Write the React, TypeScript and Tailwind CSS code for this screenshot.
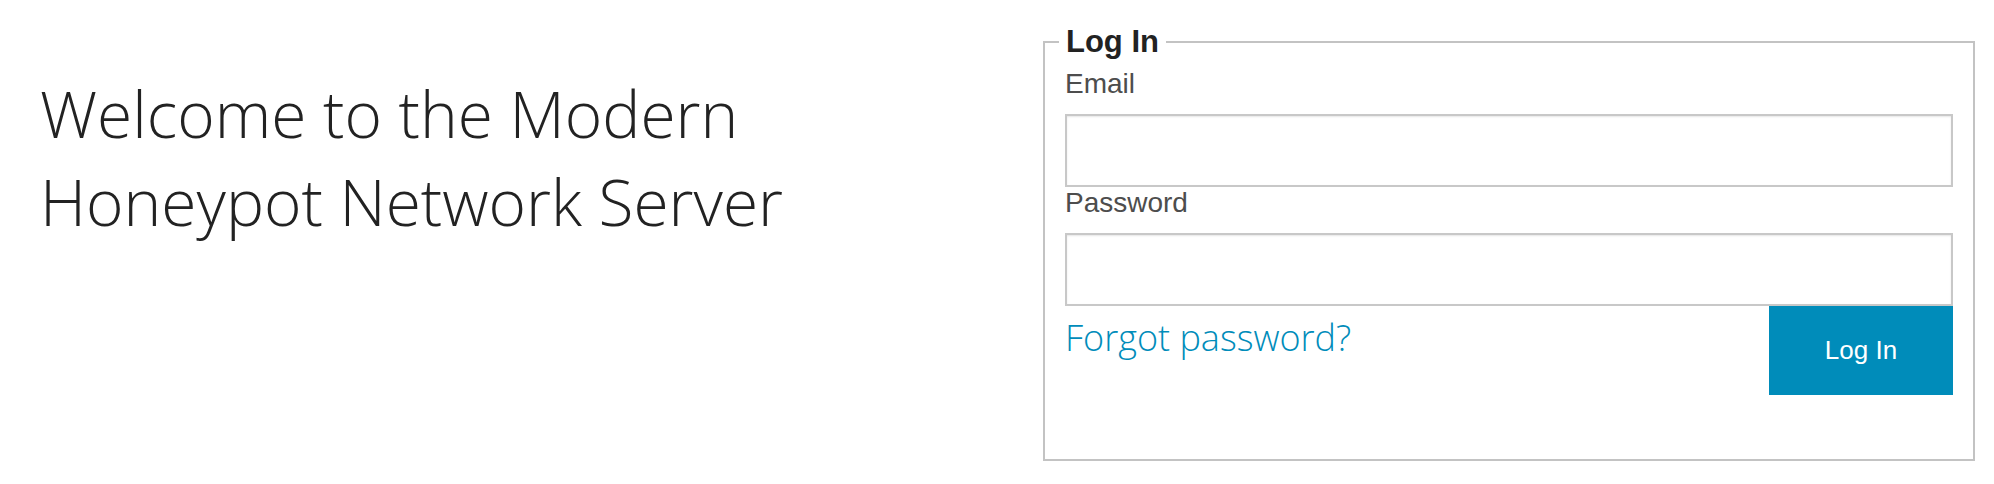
const sans = "font-['Liberation_Sans',Arial,sans-serif]";
const open = "font-['Open_Sans',sans-serif]";

function Field({ label, type }: { label: string; type: string }) {
  return (
    <div>
      <label className={`block ${sans} text-[28px] leading-[31px] text-[#4d4d4d] mb-[15px]`}>
        {label}
      </label>
      <input
        type={type}
        className="block w-full h-[73px] bg-white border-2 border-[#c8c8c8] shadow-[inset_0_1px_2px_rgba(0,0,0,0.1)] outline-none px-3"
      />
    </div>
  );
}

export default function App() {
  return (
    <div className="flex w-[1994px] min-h-[484px] bg-white">
      <div className="flex-1 pl-[40px] pt-[70px]">
        <h1 className={`${open} font-light text-[64px] leading-[88px] text-[#222222] max-w-[860px]`}>
          Welcome to the Modern Honeypot Network Server
        </h1>
      </div>
      <form className="w-[932px] mr-[19px] mt-[19px]">
        <fieldset className="border-2 border-[#c3c3c3] px-[20px] pt-[2px] pb-[64px]">
          <legend className={`${sans} font-bold text-[31px] text-[#222222] ml-[-6px] px-[7px]`}>
            Log In
          </legend>
          <Field label="Email" type="email" />
          <Field label="Password" type="password" />
          <div className="flex items-start justify-between">
            <a href="#" className={`${open} font-light text-[36px] text-[#008cba] pt-[5px]`}>
              Forgot password?
            </a>
            <button
              type="submit"
              className={`w-[184px] h-[89px] bg-[#008cba] text-white ${sans} text-[26px]`}
            >
              Log In
            </button>
          </div>
        </fieldset>
      </form>
    </div>
  );
}
